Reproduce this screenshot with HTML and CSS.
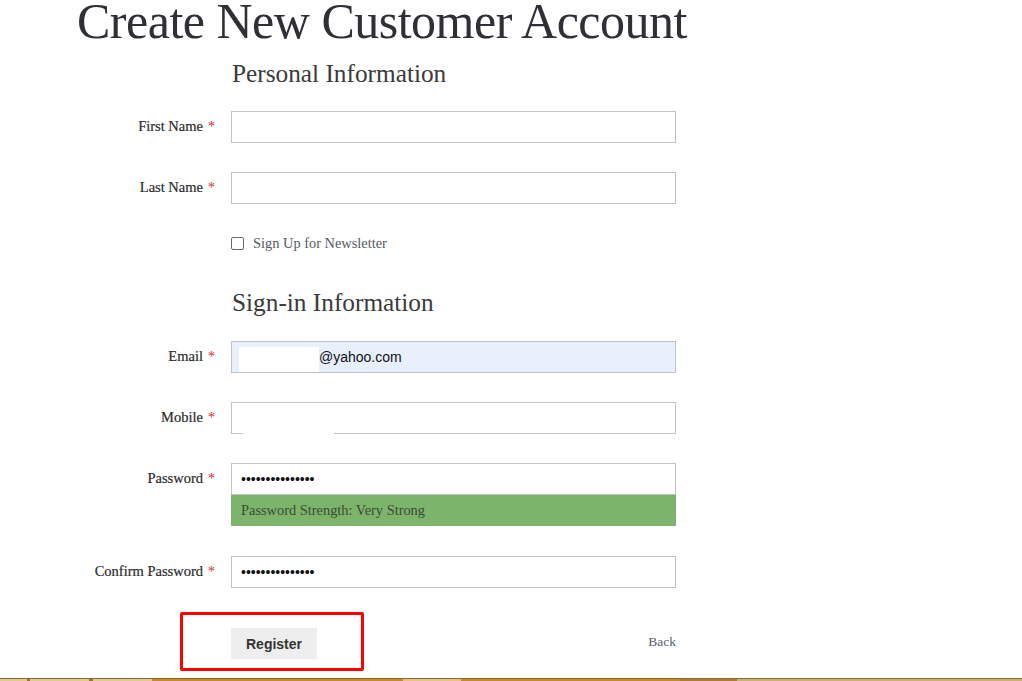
FILE: index.html
```html
<!DOCTYPE html>
<html lang="en">
<head>
<meta charset="utf-8">
<title>Create New Customer Account</title>
<link rel="stylesheet" href="styles.css">
</head>
<body>
<div class="page">
  <h1 class="title">Create New Customer Account</h1>

  <h2 class="legend legend-personal">Personal Information</h2>

  <div class="row">
    <div class="label">First Name<span class="req">*</span></div>
    <div class="box"></div>
  </div>
  <div class="row">
    <div class="label">Last Name<span class="req">*</span></div>
    <div class="box"></div>
  </div>
  <div class="row row-check">
    <div class="label"></div>
    <div class="check-wrap"><span class="checkbox"></span><span class="check-text">Sign Up for Newsletter</span></div>
  </div>

  <h2 class="legend legend-signin">Sign-in Information</h2>

  <div class="row">
    <div class="label">Email<span class="req">*</span></div>
    <div class="box box-autofill"><span class="redact"></span><span class="value">@yahoo.com</span></div>
  </div>
  <div class="row">
    <div class="label">Mobile<span class="req">*</span></div>
    <div class="box box-mobile"><span class="redact-bottom"></span></div>
  </div>
  <div class="row row-pass">
    <div class="label">Password<span class="req">*</span></div>
    <div class="pass-col">
      <div class="box"><span class="dots">&bull;&bull;&bull;&bull;&bull;&bull;&bull;&bull;&bull;&bull;&bull;&bull;&bull;&bull;&bull;</span></div>
      <div class="meter">Password Strength: Very Strong</div>
    </div>
  </div>
  <div class="row row-confirm">
    <div class="label">Confirm Password<span class="req">*</span></div>
    <div class="box"><span class="dots">&bull;&bull;&bull;&bull;&bull;&bull;&bull;&bull;&bull;&bull;&bull;&bull;&bull;&bull;&bull;</span></div>
  </div>

  <div class="actions">
    <div class="highlight"></div>
    <button class="btn" type="button">Register</button>
    <a class="back" href="#">Back</a>
  </div>

  <div class="strip">
    <span class="seg seg-l1"></span>
    <span class="seg seg-g1"></span>
    <span class="seg seg-l2"></span>
    <span class="seg seg-g2"></span>
    <span class="seg seg-l3"></span>
    <span class="seg seg-g3"></span>
    <span class="seg seg-l4"></span>
    <span class="seg seg-g4"></span>
    <span class="seg seg-g5"></span>
    <span class="seg seg-tan"></span>
  </div>
</div>
</body>
</html>
```

FILE: styles.css
```css
html, body {
  margin: 0;
  padding: 0;
  background: #ffffff;
}

.page {
  position: relative;
  width: 1022px;
  height: 681px;
  overflow: hidden;
  font-family: "Liberation Serif", "DejaVu Serif", serif;
  color: #333333;
}

.title {
  margin: 0 0 0 77px;
  font-size: 50px;
  font-weight: normal;
  letter-spacing: -0.5px;
  line-height: 42px;
  color: #2e3035;
}

.legend {
  margin: 0 0 0 232px;
  font-size: 25.3px;
  font-weight: normal;
  line-height: 30px;
  color: #3a3a3a;
}

.legend-personal {
  margin-top: 16px;
  margin-bottom: 23px;
}

.legend-signin {
  margin-top: 34px;
  margin-bottom: 24px;
}

.row {
  display: flex;
  align-items: center;
  margin-bottom: 29px;
}

.row-pass {
  align-items: flex-start;
  margin-bottom: 30px;
}

.row-pass .label {
  height: 30px;
  line-height: 30px;
}

.row-check {
  height: 20px;
  margin-bottom: 0;
}

.label {
  width: 215px;
  flex: none;
  padding-right: 16px;
  padding-bottom: 2px;
  text-align: right;
  font-size: 14.5px;
  color: #2b2b2b;
  -webkit-text-stroke: 0.2px #2b2b2b;
}

.req {
  margin-left: 5px;
  color: #e02b27;
  font-size: 14px;
  -webkit-text-stroke: 0;
}

.box {
  position: relative;
  box-sizing: border-box;
  width: 445px;
  height: 32px;
  border: 1px solid #c2c2c2;
  background: #ffffff;
  display: flex;
  align-items: center;
  padding-left: 9px;
}

.box-autofill {
  background: #e8f0fe;
  padding-left: 7px;
  align-items: stretch;
}

.redact {
  display: block;
  width: 80px;
  margin-top: 5px;
  background: #ffffff;
}

.value {
  font-family: "Liberation Sans", Arial, sans-serif;
  font-size: 14px;
  color: #111111;
  line-height: 30px;
}

.redact-bottom {
  position: absolute;
  left: 11px;
  bottom: -3px;
  width: 91px;
  height: 9px;
  background: #ffffff;
}

.dots {
  font-family: "Liberation Sans", Arial, sans-serif;
  font-size: 14px;
  color: #111111;
}

.pass-col {
  display: flex;
  flex-direction: column;
}

.meter {
  box-sizing: border-box;
  width: 445px;
  height: 31px;
  line-height: 31px;
  padding-left: 10px;
  background: #7db46b;
  font-size: 14.4px;
  color: #3b4a36;
}

.check-wrap {
  display: flex;
  align-items: center;
}

.checkbox {
  display: block;
  box-sizing: border-box;
  width: 13px;
  height: 13px;
  border: 1px solid #6b6b6b;
  border-radius: 2px;
  background: #ffffff;
}

.check-text {
  margin-left: 9px;
  font-size: 14.4px;
  color: #555a60;
}

.actions {
  position: relative;
  display: flex;
  align-items: center;
  justify-content: space-between;
  width: 445px;
  margin: 40px 0 0 231px;
}

.highlight {
  position: absolute;
  left: -51px;
  top: -16px;
  width: 178px;
  height: 53px;
  border: 3px solid #ff0000;
  border-radius: 2px;
}

.btn {
  height: 31px;
  padding: 0 15px;
  border: none;
  background: #eeeeee;
  font-family: "Liberation Sans", Arial, sans-serif;
  font-size: 14px;
  font-weight: bold;
  color: #333333;
  cursor: pointer;
}

.back {
  font-size: 13.5px;
  color: #55606b;
  text-decoration: none;
  margin-top: -4px;
}

.strip {
  display: flex;
  margin-top: 19px;
  border-top: 1px solid #8e6b2c;
  box-sizing: border-box;
  height: 4px;
}

.seg {
  display: block;
  height: 100%;
}

.seg-l1 { width: 27px; background: #e4c892; }
.seg-g1 { width: 3px; background: #9b7330; }
.seg-l2 { width: 59px; background: #e4c892; }
.seg-g2 { width: 4px; background: #9b7330; }
.seg-l3 { width: 59px; background: #e4c892; }
.seg-g3 { width: 251px; background: #c28a2f; }
.seg-l4 { width: 58px; background: #e2c38a; }
.seg-g4 { width: 219px; background: #c28a2f; }
.seg-g5 { width: 57px; background: #a87f35; }
.seg-tan { flex: 1; background: #c7b07c; }
```
